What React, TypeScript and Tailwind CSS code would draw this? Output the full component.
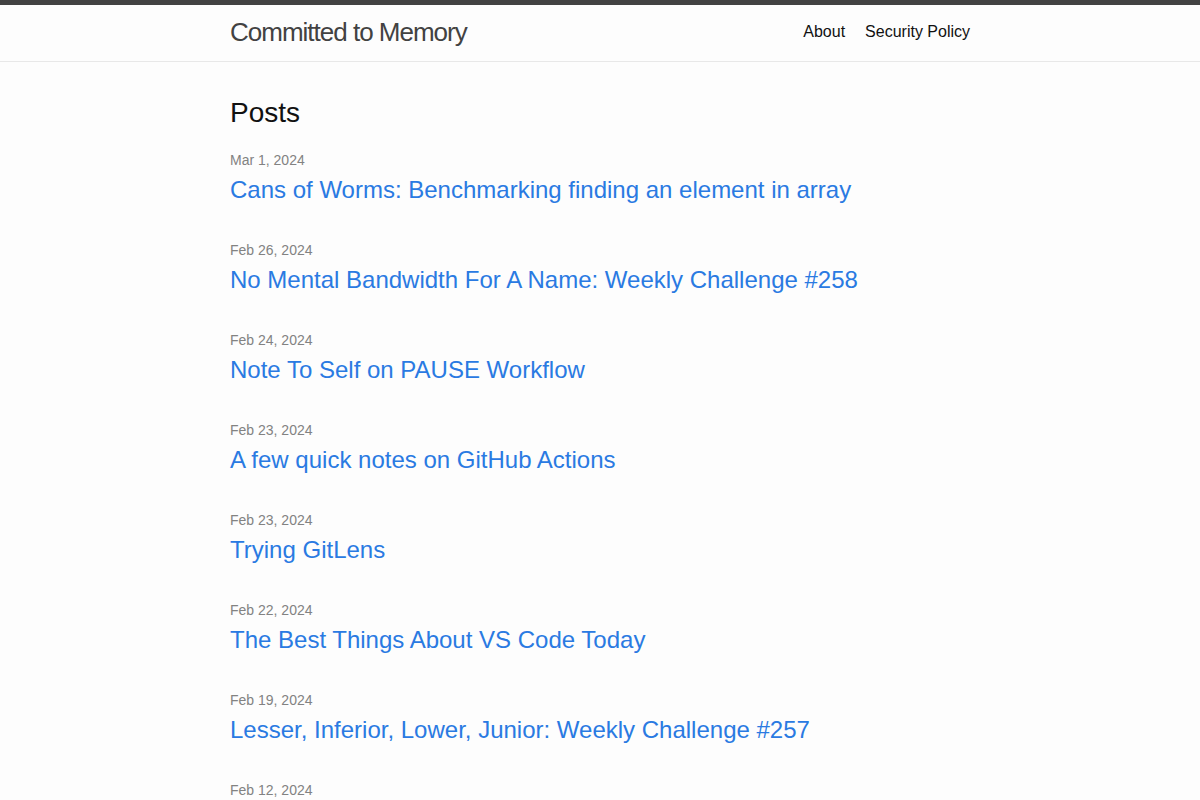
const posts = [
  { date: "Mar 1, 2024", title: "Cans of Worms: Benchmarking finding an element in array" },
  { date: "Feb 26, 2024", title: "No Mental Bandwidth For A Name: Weekly Challenge #258" },
  { date: "Feb 24, 2024", title: "Note To Self on PAUSE Workflow" },
  { date: "Feb 23, 2024", title: "A few quick notes on GitHub Actions" },
  { date: "Feb 23, 2024", title: "Trying GitLens" },
  { date: "Feb 22, 2024", title: "The Best Things About VS Code Today" },
  { date: "Feb 19, 2024", title: "Lesser, Inferior, Lower, Junior: Weekly Challenge #257" },
  { date: "Feb 12, 2024", title: "Merge the Maximum: Weekly Challenge #256" },
];

export default function App() {
  return (
    <div
      className="min-h-screen bg-[#fdfdfd] text-[#111111]"
      style={{ fontFamily: '"Liberation Sans", Arial, Helvetica, sans-serif' }}
    >
      <header className="border-t-[5px] border-t-[#424242] border-b border-b-[#e8e8e8]">
        <div className="mx-auto flex h-[56px] w-[800px] items-start justify-between px-[30px]">
          <a
            href="#"
            className="text-[26px] font-light leading-[54px] tracking-[-1px] text-[#424242]"
          >
            Committed to Memory
          </a>
          <nav className="flex gap-5 text-base leading-[54px] text-[#111111]">
            <a href="#">About</a>
            <a href="#">Security Policy</a>
          </nav>
        </div>
      </header>

      <main className="mx-auto w-[800px] px-[30px] pt-[30px]">
        <h2 className="mb-[16px] text-[28px] leading-[42px]">Posts</h2>
        <ul className="flex flex-col gap-[31px]">
          {posts.map((p, i) => (
            <li key={i}>
              <div className="text-sm leading-[21px] text-[#828282]">{p.date}</div>
              <h3 className="text-2xl leading-[38px]">
                <a href="#" className="text-[#2a7ae2]">
                  {p.title}
                </a>
              </h3>
            </li>
          ))}
        </ul>
      </main>
    </div>
  );
}
